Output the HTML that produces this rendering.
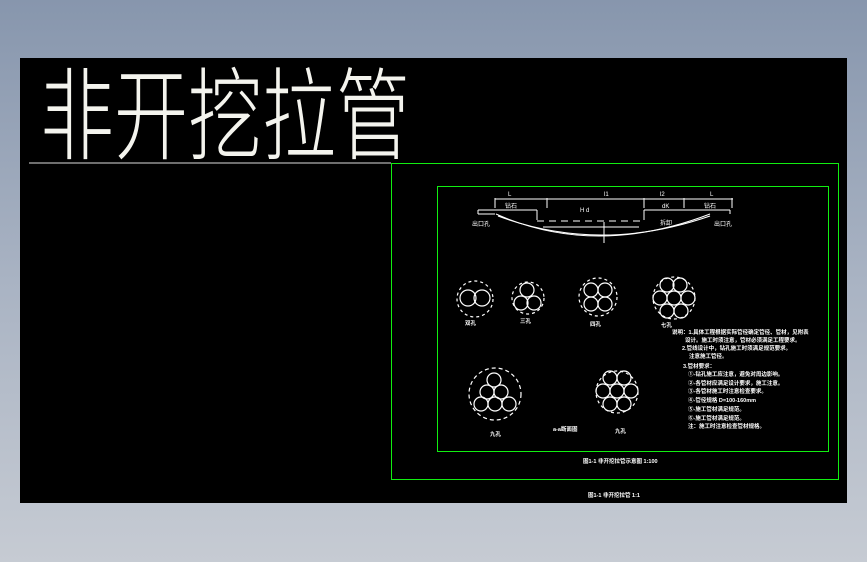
<!DOCTYPE html>
<html><head><meta charset="utf-8"><style>
html,body{margin:0;padding:0;}
body{width:867px;height:562px;overflow:hidden;background:linear-gradient(#8796ad,#a9b3c3 50%,#c6cbd3);position:relative;font-family:"Liberation Sans","Noto Sans CJK SC",sans-serif;}
#cad{position:absolute;left:20px;top:58px;width:827px;height:445px;background:#000;overflow:hidden;}
.t{position:absolute;left:20px;top:-22px;color:#f4f4ee;font-family:"Noto Sans CJK SC",sans-serif;font-weight:300;font-size:74px;transform:scale(1,1.36);transform-origin:0 0;white-space:nowrap;}
</style></head><body>
<div id="cad">
<div class="t">非开挖拉管</div>
<svg width="827" height="445" style="position:absolute;left:0;top:0" font-family="Liberation Sans,Noto Sans CJK SC,sans-serif" fill="none" stroke="#fff" stroke-width="1">
<line x1="9" y1="105" x2="371" y2="105" stroke="#ddd"/>
<rect x="371.5" y="105.5" width="447" height="316" stroke="#1e1"/>
<rect x="417.5" y="128.5" width="391" height="265" stroke="#1e1"/>
<line x1="475" y1="141" x2="713" y2="141"/>
<line x1="458" y1="152" x2="517" y2="152"/><line x1="458" y1="152" x2="458" y2="156"/>
<line x1="458" y1="156" x2="475" y2="156"/>
<line x1="517" y1="152" x2="517" y2="162"/>
<line x1="517" y1="163" x2="624" y2="163" stroke-dasharray="7,5"/>
<line x1="624" y1="152" x2="710" y2="152"/><line x1="624" y1="152" x2="624" y2="162"/>
<line x1="710" y1="152" x2="710" y2="156"/>
<line x1="523" y1="169" x2="619" y2="169"/>
<path d="M476 156 Q575 200 690 156"/>
<path d="M478 158 Q580 196 690 158"/>
<line x1="475" y1="140" x2="475" y2="150"/><line x1="527" y1="140" x2="527" y2="150"/><line x1="624" y1="140" x2="624" y2="150"/><line x1="664" y1="140" x2="664" y2="150"/><line x1="712" y1="140" x2="712" y2="150"/>
<line x1="584" y1="164" x2="584" y2="185"/>
<g fill="#fff" stroke="none" font-size="6">
<text x="485" y="150">钻石</text><text x="560" y="154">H d</text><text x="642" y="150">dK</text><text x="684" y="150">钻石</text>
<text x="452" y="168">出口孔</text><text x="694" y="168">出口孔</text><text x="640" y="167">拆卸</text>
<text x="488" y="138">L</text><text x="584" y="138">l1</text><text x="640" y="138">l2</text><text x="690" y="138">L</text>
</g>
<g stroke-width="1.2">
<circle cx="448" cy="240" r="8"/><circle cx="462" cy="240" r="8"/><circle cx="455" cy="241" r="18" stroke-dasharray="3,3"/>
<circle cx="507" cy="232" r="7"/><circle cx="501" cy="245" r="7"/><circle cx="514" cy="245" r="7"/><circle cx="508" cy="240" r="16" stroke-dasharray="3,3"/>
<circle cx="571" cy="232" r="7"/><circle cx="585" cy="232" r="7"/><circle cx="571" cy="246" r="7"/><circle cx="585" cy="246" r="7"/><circle cx="578" cy="239" r="19" stroke-dasharray="3,3"/>
<circle cx="647" cy="227" r="7"/><circle cx="660" cy="227" r="7"/><circle cx="640" cy="240" r="7"/><circle cx="654" cy="240" r="7"/><circle cx="668" cy="240" r="7"/><circle cx="647" cy="253" r="7"/><circle cx="661" cy="253" r="7"/><circle cx="654" cy="240" r="21" stroke-dasharray="3,3"/>
<circle cx="474" cy="322" r="7"/><circle cx="467" cy="334" r="7"/><circle cx="481" cy="334" r="7"/><circle cx="461" cy="346" r="7"/><circle cx="475" cy="346" r="7"/><circle cx="489" cy="346" r="7"/><circle cx="475" cy="336" r="26" stroke-dasharray="4,3"/>
<circle cx="590" cy="320" r="7"/><circle cx="604" cy="320" r="7"/><circle cx="583" cy="333" r="7"/><circle cx="597" cy="333" r="7"/><circle cx="611" cy="333" r="7"/><circle cx="590" cy="346" r="7"/><circle cx="604" cy="346" r="7"/><circle cx="597" cy="334" r="21" stroke-dasharray="3,3"/>
</g>
<g fill="#fff" stroke="none" font-size="5.5" font-weight="bold">
<text x="445" y="267">双孔</text><text x="500" y="265">三孔</text><text x="570" y="268">四孔</text><text x="641" y="269">七孔</text>
<text x="470" y="378">九孔</text><text x="595" y="375">九孔</text><text x="533" y="373">a-a断面图</text>
<text x="652" y="276">说明：1.具体工程根据实际管径确定管径、管材，见附表</text>
<text x="665" y="284">设计。施工时须注意，管材必须满足工程要求。</text>
<text x="662" y="292">2.管线设计中，钻孔施工时须满足规范要求。</text>
<text x="669" y="300">注意施工管径。</text>
<text x="663" y="310">3.管材要求：</text>
<text x="668" y="318">①-钻孔施工应注意，避免对周边影响。</text>
<text x="668" y="327">②-各管材应满足设计要求，施工注意。</text>
<text x="668" y="335">③-各管材施工时注意检查要求。</text>
<text x="668" y="344">④-管径规格 D=100-160mm</text>
<text x="668" y="353">⑤-施工管材满足规范。</text>
<text x="668" y="362">⑥-施工管材满足规范。</text>
<text x="668" y="370">注：施工时注意检查管材规格。</text>
<text x="563" y="405">图1-1 非开挖拉管示意图 1:100</text>
<text x="568" y="439">图1-1 非开挖拉管 1:1</text>
</g>
</svg>
</div>
</body></html>
